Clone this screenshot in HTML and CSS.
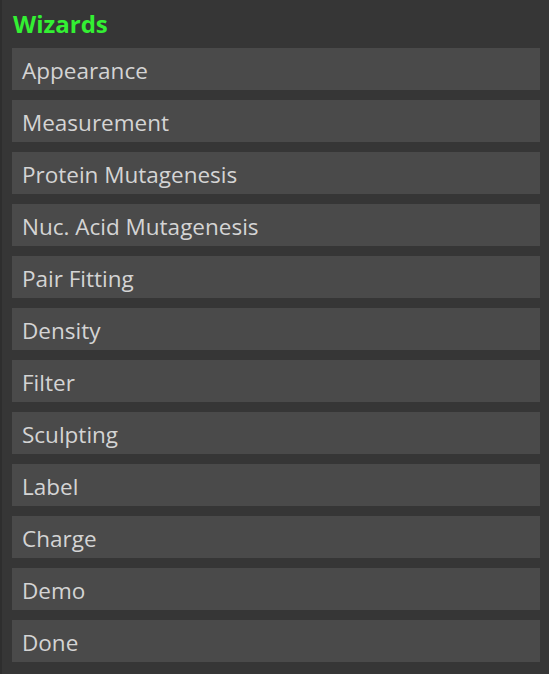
FILE: index.html
```html
<!DOCTYPE html>
<html>
<head>
<meta charset="utf-8">
<link rel="stylesheet" href="styles.css">
</head>
<body>
<div class="panel">
  <div class="title">Wizards</div>
  <div class="list">
    <div class="btn">Appearance</div>
    <div class="btn">Measurement</div>
    <div class="btn">Protein Mutagenesis</div>
    <div class="btn">Nuc. Acid Mutagenesis</div>
    <div class="btn">Pair Fitting</div>
    <div class="btn">Density</div>
    <div class="btn">Filter</div>
    <div class="btn">Sculpting</div>
    <div class="btn">Label</div>
    <div class="btn">Charge</div>
    <div class="btn">Demo</div>
    <div class="btn">Done</div>
  </div>
</div>
</body>
</html>
```
FILE: styles.css
```css
html, body {
  margin: 0;
  padding: 0;
  background: #363636;
  height: 100%;
}
.panel {
  box-sizing: border-box;
  height: 674px;
  border-left: 2px solid #2e2e2e;
  padding: 0 9px 0 10px;
  font-family: "Open Sans", "Noto Sans", sans-serif;
}
.title {
  height: 48px;
  box-sizing: border-box;
  padding: 9px 0 0 1px;
  font-size: 24px;
  font-weight: bold;
  color: #33f033;
  line-height: 30px;
}
.list {
  display: flex;
  flex-direction: column;
  gap: 10px;
}
.btn {
  box-sizing: border-box;
  height: 42px;
  background: #4a4a4a;
  color: #d4d4d4;
  font-size: 22.5px;
  line-height: 42px;
  padding: 2px 0 0 10px;
}
```
